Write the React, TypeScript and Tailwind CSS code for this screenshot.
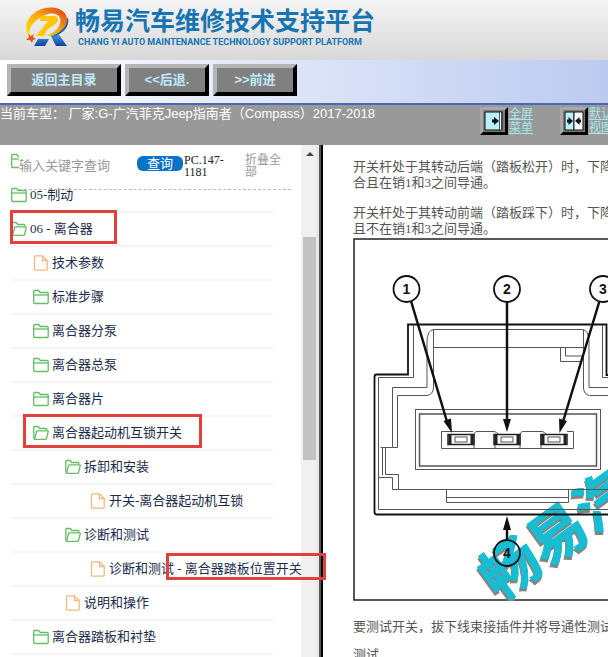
import type { ReactNode } from "react";
import clsx from "clsx";

type NodeKind = "closed" | "open" | "file";

interface TreeNode {
    level: number;
    kind: NodeKind;
    label: string;
    mark?: string;
    marked?: boolean;
}

const nodes: TreeNode[] = [
    { level: 0, kind: "closed", label: "" },
    { level: 0, kind: "closed", label: "05-制动" },
    { level: 0, kind: "open", label: "06 - 离合器", marked: true },
    { level: 1, kind: "file", label: "技术参数" },
    { level: 1, kind: "closed", label: "标准步骤" },
    { level: 1, kind: "closed", label: "离合器分泵" },
    { level: 1, kind: "closed", label: "离合器总泵" },
    { level: 1, kind: "closed", label: "离合器片" },
    { level: 1, kind: "open", label: "离合器起动机互锁开关", marked: true },
    { level: 2, kind: "open", label: "拆卸和安装" },
    { level: 3, kind: "file", label: "开关-离合器起动机互锁" },
    { level: 2, kind: "open", label: "诊断和测试" },
    { level: 3, kind: "file", label: "诊断和测试", mark: " - 离合器踏板位置开关" },
    { level: 2, kind: "file", label: "说明和操作" },
    { level: 1, kind: "closed", label: "离合器踏板和衬垫" },
];

const indents = ["pl-0", "pl-[22px]", "pl-[54px]", "pl-[79px]"];

function NodeIcon({ kind }: { kind: NodeKind }) {
    if (kind === "file") {
        return (
            <svg className="h-4 w-4 shrink-0" viewBox="0 0 16 16" fill="none" stroke="#f3b77f" strokeWidth="1.3" aria-hidden="true">
                <path d="M2.5.8h7l4.700 4.700v8.700q0 1-1 1h-10.700q-1 0-1-1V1.800q0-1 1-1z" />
                <path d="M9.500.8v4.700h4.700" />
            </svg>
        );
    }
    return (
        <svg className="h-4 w-4 shrink-0" viewBox="0 0 16 16" fill="none" stroke="#62bf62" strokeWidth="1.3" strokeLinejoin="round" aria-hidden="true">
            {kind === "closed" ? (
                <>
                    <path d="M.7 2.500q0-1 1-1h4l1.500 2h7q1 0 1 1v9q0 1-1 1H1.700q-1 0-1-1z" />
                    <path d="M.7 6h14.600" />
                </>
            ) : (
                <>
                    <path d="M1.500 14.300.8 13V2.500q0-1 1-1h3.500l1.500 2h6q1 0 1 1v1.300" />
                    <path d="M1.500 14.300 3.600 6.500q.2-.7 1-.7h9.700q1.200 0 .9 1l-1.700 6.700q-.2.800-1 .8z" />
                </>
            )}
        </svg>
    );
}

function Logo() {
    return (
        <svg className="h-12 w-12 shrink-0" viewBox="0 0 48 48" aria-hidden="true">
            <defs>
                <linearGradient id="swoosh" x1="0" y1="1" x2="1" y2="0">
                    <stop offset="0" stopColor="#ffe600" />
                    <stop offset=".5" stopColor="#fbab12" />
                    <stop offset="1" stopColor="#de3a12" />
                </linearGradient>
                <linearGradient id="leg" x1="0" y1="0" x2="0" y2="1">
                    <stop offset="0" stopColor="#49b4e8" />
                    <stop offset="1" stopColor="#133f9c" />
                </linearGradient>
            </defs>
            <path d="M11 42 15 35h11l-4 7zM27 30l7-2 10 14H33z" fill="url(#leg)" />
            <path d="M45 14c2 11-8 17-17 19 8-4 13-9 15-18z" fill="#1b58ae" />
            <path
                d="M8 34C-1 26 3 14 14 7c11-6 25-4 29 4 4 9-4 18-16 21l-4-1c10-2 16-10 14-17-2-6-13-6-20 0C8 19 4 27 8 34z"
                fill="url(#swoosh)"
            />
            <path d="M18 12h13c4 0 5 3 3 6-3 5-9 5-11 10l-2 4h-8l12-15h-8z" fill="#ffc60c" />
            <path d="m5 30 3 2 3-2-1 3 3 2-3 1-1 3-2-3-4 0 3-3z" fill="#e2561c" />
        </svg>
    );
}

function ToolButton({ children, className }: { children: ReactNode; className: string }) {
    return (
        <button
            type="button"
            className={clsx(
                "h-8 border-4 border-t-[#b5b5b5] border-r-black border-b-black border-l-[#b5b5b5] bg-[#808080] text-[13px] leading-5 font-bold text-[#bfe9fb]",
                className,
            )}
        >
            {children}
        </button>
    );
}

function ViewButton({ label, lines, children }: { label: string; lines: string[]; children: ReactNode }) {
    return (
        <div className="flex w-20 shrink-0 items-start">
            <button
                type="button"
                aria-label={label}
                className="mr-px flex size-7 shrink-0 items-center justify-center border-3 border-t-[#a8a8a8] border-r-black border-b-black border-l-[#a8a8a8] bg-[#7b7b7b]"
            >
                <svg className="size-5 shrink-0" viewBox="0 0 20 20" aria-hidden="true">
                    {children}
                </svg>
            </button>
            <a href="#view" className="shrink-0 text-[12px] leading-[14px] text-[#a5e9ee] underline">
                {lines.map((line) => (
                    <span key={line} className="block">
                        {line}
                    </span>
                ))}
            </a>
        </div>
    );
}

function TreeRow({ node }: { node: TreeNode }) {
    return (
        <li className={clsx("flex h-[34px] items-center border-b-2", node.label ? "border-[#f5f5f5]" : "border-transparent")}>
            <div className={clsx("relative flex items-center", indents[node.level])}>
                <NodeIcon kind={node.kind} />
                {node.label && (
                    <a href="#node" className="ml-[3px] whitespace-pre text-[#1b2b4b]">
                        {node.label}
                        {node.mark && (
                            <span className="relative">
                                {node.mark}
                                <span className="absolute -top-2 -right-6 -bottom-1 -left-2 z-20 border-3 border-[#e2403f]" />
                            </span>
                        )}
                    </a>
                )}
                {node.marked && (
                    <span
                        className={clsx(
                            "absolute -top-2.5 -bottom-1.5 border-3 border-[#e2403f]",
                            node.level === 0 ? "-right-6 -left-px" : "-right-5 left-3",
                        )}
                    />
                )}
            </div>
        </li>
    );
}

function Sidebar() {
    return (
        <aside className="relative z-10 flex w-[323px] shrink-0 bg-white">
            <div className="relative min-w-0 flex-1">
                <form className="absolute top-0 right-2.5 left-[19px] z-10 flex h-[45px] items-start border-b border-dashed border-[#bbb] pt-[9px]">
                    <input
                        type="text"
                        aria-label="关键字"
                        placeholder="输入关键字查询"
                        className="h-[22px] w-[118px] shrink-0 bg-white text-[13px] outline-none placeholder:text-[#999]"
                    />
                    <button type="button" className="mt-0.5 mr-px h-[15px] w-[46px] shrink-0 rounded-md bg-[#0b73c6] text-[13px] leading-[15px] text-white">
                        查询
                    </button>
                    <span className="w-[61px] shrink-0 font-['Liberation_Serif','Noto_Sans_CJK_SC',serif] text-[12px] leading-3 text-[#222]">
                        PC.147-
                        <br />
                        1181
                    </span>
                    <a href="#collapse" className="w-9 shrink-0 text-[12px] leading-3 text-[#999]">
                        折叠全部
                    </a>
                </form>
                <ul className="mr-7 ml-[11px] font-['Liberation_Serif','Noto_Sans_CJK_SC',serif] text-[13px] leading-[18px]">
                    {nodes.map((node, i) => (
                        <TreeRow key={i} node={node} />
                    ))}
                </ul>
            </div>
            {/* scroll bar */}
            <div className="flex w-[15px] flex-col items-end bg-[#f0f0f0]">
                <svg className="mt-1.5 mr-0.5 h-1.5 w-2" viewBox="0 0 8 6" aria-hidden="true">
                    <path d="M0 5 4 1l4 4z" fill="#444" />
                </svg>
                <div className="mt-20 h-[223px] w-[13px] bg-[#c1c1c1]" />
            </div>
            <div className="w-[7px] border-r-2 border-black bg-[#e8e8e8]">
                <div className="ml-[3px] h-full w-0.5 bg-[#555]" />
            </div>
        </aside>
    );
}

function Terminal({ x }: { x: number }) {
    return (
        <g>
            <rect x={x - 13} y="434.500" width="26" height="10" stroke="#222" strokeWidth="1.500" />
            <path d={`M${x - 11} 434v11M${x + 11} 434v11`} stroke="#222" strokeWidth="3" />
            <rect x={x - 6} y="437" width="12" height="5" strokeWidth="1" />
        </g>
    );
}

function Callout({ x, y, n }: { x: number; y: number; n: number }) {
    return (
        <g>
            <circle cx={x} cy={y} r="13" stroke="#111" strokeWidth="1.8" />
            <text x={x} y={y + 5} textAnchor="middle" fill="#111" stroke="none" className="font-['Liberation_Sans',sans-serif] text-[14px] font-bold">
                {n}
            </text>
        </g>
    );
}

function ConnectorDiagram() {
    return (
        <svg className="h-[363px] w-[310px] shrink-0" viewBox="353 238 310 363" fill="none" stroke="#555" strokeWidth="1" role="img" aria-label="离合器踏板位置开关连接器">
            <rect x="354" y="239" width="308" height="361" stroke="#222" strokeWidth="1.5" />
            <g transform="rotate(-36 511 569)" className="font-['Noto_Sans_CJK_SC',sans-serif] text-[58px] font-bold">
                <text x="480" y="591" fill="#8b8078" stroke="#8b8078">
                    畅易汽车
                </text>
                <text x="482" y="589" fill="#18bcd3" stroke="#18bcd3">
                    畅易汽车
                </text>
            </g>
            {/* housing */}
            <path d="M408 324.500h198.500V375h33v137q0 2.500-2 2.500H377q-2.500 0-2.500-2.500V377q0-2.500 2-2.500H408z" stroke="#111" strokeWidth="1.8" />
            <path d="M413.500 325v52.500h-35V509.500h257V377.500h-33V325" />
            <path d="M397.500 447.500h-5v-60H427V342q0-12 7-12.500h148q7 .5 7 12.500v45.500h35v60" />
            <path d="M392.500 447.500h-12M397.500 447.500v-52H427q6-1 6.500-7.500V329.500M583.500 329.500V388q.5 6.500 6 7.500h30v52" />
            <path d="M433.500 347.500h150M560.500 347.500v14h20M565.500 347.500v8.500h17" />
            <path d="M382.500 447v28M385.500 448v26.500h13v14.500M379 477.500h13.500v12H630" />
            <path d="M446.500 489.500v13h122v-13M446.500 497.500h122" />
            {/* terminal window */}
            <rect x="415.500" y="409.500" width="185" height="60" />
            <rect x="419.500" y="414" width="177" height="52" strokeWidth="1.500" />
            <path d="M448 431.500h-6.500v17h132v-17H567M448 431.500h25M474 434l2-2.500h18q3 .5 4 2.500M520 434l2-2.500h20q3 .5 4 2.500M474 434v14M495 434v14M520 434v14M541 434v14" />
            <Terminal x={461} />
            <Terminal x={507} />
            <Terminal x={554} />
            {/* pointers */}
            <g stroke="#111" strokeWidth="2.5">
                <path d="m411 301 37 124M507 302v122M599.500 301 562 425M507 540v-12" />
            </g>
            <g fill="#111" stroke="none">
                <path d="m452 433-8.500-12 7.500-2.500zM507 432l-4-13h8zM559.500 433l-.5-14.500 8 2.500zM507 516l-4 14h8z" />
            </g>
            <Callout x={406.5} y={289} n={1} />
            <Callout x={507} y={289} n={2} />
            <Callout x={603} y={289} n={3} />
            <Callout x={507} y={553} n={4} />
        </svg>
    );
}

export default function App() {
    return (
        <div className="flex h-screen flex-col overflow-hidden bg-white font-['Liberation_Sans','Noto_Sans_CJK_SC',sans-serif]">
            <header className="flex h-[60px] shrink-0 items-start bg-linear-to-b from-[#f5f5f5] to-[#d8d8d8] pt-1 pl-[23px]">
                <Logo />
                <div className="pt-1 pl-1 whitespace-nowrap text-[#1674b1]">
                    <h1 className="text-[25px] leading-[26px] font-bold">畅易汽车维修技术支持平台</h1>
                    <p className="pl-[3px] font-[Roboto,sans-serif] text-[9px] leading-4 font-bold">
                        CHANG YI AUTO MAINTENANCE TECHNOLOGY SUPPORT PLATFORM
                    </p>
                </div>
            </header>

            <nav className="flex h-[45px] shrink-0 gap-1 border-b-2 border-[#4a68b8] bg-linear-to-r from-white to-[#bccaf0] pt-1 pl-[7px]">
                <ToolButton className="w-[114px]">返回主目录</ToolButton>
                <ToolButton className="w-[84px]">&lt;&lt;后退.</ToolButton>
                <ToolButton className="w-[84px]">&gt;&gt;前进</ToolButton>
            </nav>

            <div className="flex h-10 shrink-0 bg-[#999]">
                <p className="min-w-0 flex-1 text-[13px] leading-[18px] whitespace-pre text-white">
                    当前车型： 厂家:G-广汽菲克Jeep指南者（Compass）2017-2018
                </p>
                <div className="flex w-32 shrink-0 overflow-hidden pt-0.5">
                    <ViewButton label="全屏菜单" lines={["全屏", "菜单"]}>
                        <path d="M1 1h17v18H1z" fill="#b9f1f8" stroke="#111" />
                        <path d="M15.500 1h2v18h-2z" fill="#fff" stroke="#111" strokeWidth=".7" />
                        <path d="M8 8.500h2V6l5 4-5 4v-2.500H8z" fill="#111" />
                    </ViewButton>
                    <ViewButton label="默认视图" lines={["默认", "视图"]}>
                        <path d="M1 1h9v18H1z" fill="#b9f1f8" stroke="#111" />
                        <path d="M10 1h9v18h-9z" fill="#fff" stroke="#111" />
                        <path d="M3 8.500h1.500V6L9 10l-4.500 4v-2.500H3zM17 8.500h-1.500V6L11 10l4.500 4v-2.500H17z" fill="#111" />
                    </ViewButton>
                </div>
            </div>

            <div className="flex min-h-0 flex-1">
                <Sidebar />
                <main className="min-w-0 flex-1 overflow-hidden pt-3.5 pl-[30px] font-['Liberation_Serif','Noto_Sans_CJK_SC',serif] text-[13px] leading-4 whitespace-nowrap text-[#555]">
                    <p>
                        开关杆处于其转动后端（踏板松开）时，下降
                        <br />
                        合且在销1和3之间导通。
                    </p>
                    <p className="mt-3.5">
                        开关杆处于其转动前端（踏板踩下）时，下降
                        <br />
                        且不在销1和3之间导通。
                    </p>
                    <div className="flex pt-px">
                        <ConnectorDiagram />
                    </div>
                    <p className="mt-[18px]">要测试开关，拔下线束接插件并将导通性测试</p>
                    <p className="mt-3">测试</p>
                </main>
            </div>
        </div>
    );
}
